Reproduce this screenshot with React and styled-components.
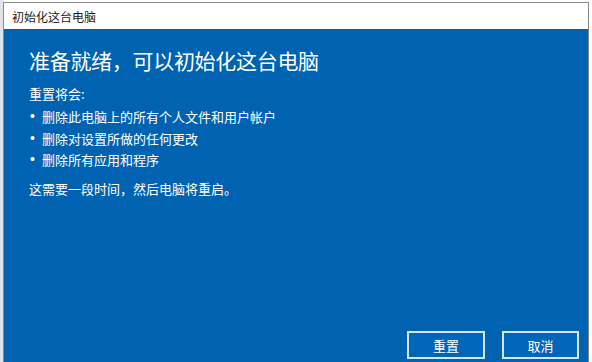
import React from "react";
import styled, { createGlobalStyle } from "styled-components";

const GlobalStyle = createGlobalStyle`
  html, body {
    margin: 0;
    padding: 0;
    height: 362px;
    overflow: hidden;
    background: #f3f3f3;
    font-family: "Noto Sans CJK SC", "Noto Sans", sans-serif;
  }
`;

const Desktop = styled.div`
  height: 362px;
  padding: 2px 3px 0 3px;
  box-sizing: border-box;
  background: linear-gradient(to right, #dfe4ea 0, #dfe4ea 4px, #ffffff 4px);
`;

const Window = styled.div`
  height: 100%;
  display: flex;
  flex-direction: column;
  border: 1px solid #8a8a8a;
  border-bottom: none;
  box-sizing: border-box;
  background: #ffffff;
`;

const TitleBar = styled.div`
  height: 26px;
  flex: none;
  display: flex;
  align-items: center;
  padding-left: 8px;
  font-size: 12px;
  color: #1a1a1a;
  background: #ffffff;
`;

const Panel = styled.div`
  flex: 1;
  display: flex;
  flex-direction: column;
  background: #0063b1;
  color: #ffffff;
  padding: 17px 9px 3px 25px;
`;

const Heading = styled.h1`
  margin: 0;
  font-size: 21px;
  font-weight: 400;
  line-height: 28px;
  letter-spacing: -0.3px;
`;

const Intro = styled.p`
  margin: 9px 0 0;
  font-size: 13px;
  line-height: 22px;
`;

const List = styled.ul`
  margin: 1px 0 0;
  padding: 0;
  list-style: none;
`;

const Item = styled.li`
  display: flex;
  align-items: center;
  font-size: 13px;
  line-height: 21.5px;

  &::before {
    content: "•";
    width: 13px;
    flex: none;
    padding-left: 1px;
    box-sizing: border-box;
    font-family: "Liberation Sans", Arial, sans-serif;
    font-size: 14px;
  }
`;

const Note = styled.p`
  margin: 7px 0 0;
  font-size: 13px;
  line-height: 22px;
`;

const Footer = styled.div`
  margin-top: auto;
  display: flex;
  justify-content: flex-end;
  gap: 17px;
`;

const Button = styled.button`
  width: ${(p) => p.$w}px;
  height: 28px;
  box-sizing: border-box;
  border: 2px solid #d6e6f5;
  background: #0067b8;
  color: #ffffff;
  font-family: inherit;
  font-size: 13px;
  padding: 0;
  cursor: pointer;
`;

export default function App() {
  return (
    <>
      <GlobalStyle />
      <Desktop>
        <Window>
          <TitleBar>初始化这台电脑</TitleBar>
          <Panel>
            <Heading>准备就绪，可以初始化这台电脑</Heading>
            <Intro>重置将会:</Intro>
            <List>
              <Item>删除此电脑上的所有个人文件和用户帐户</Item>
              <Item>删除对设置所做的任何更改</Item>
              <Item>删除所有应用和程序</Item>
            </List>
            <Note>这需要一段时间，然后电脑将重启。</Note>
            <Footer>
              <Button $w={78}>重置</Button>
              <Button $w={77}>取消</Button>
            </Footer>
          </Panel>
        </Window>
      </Desktop>
    </>
  );
}
